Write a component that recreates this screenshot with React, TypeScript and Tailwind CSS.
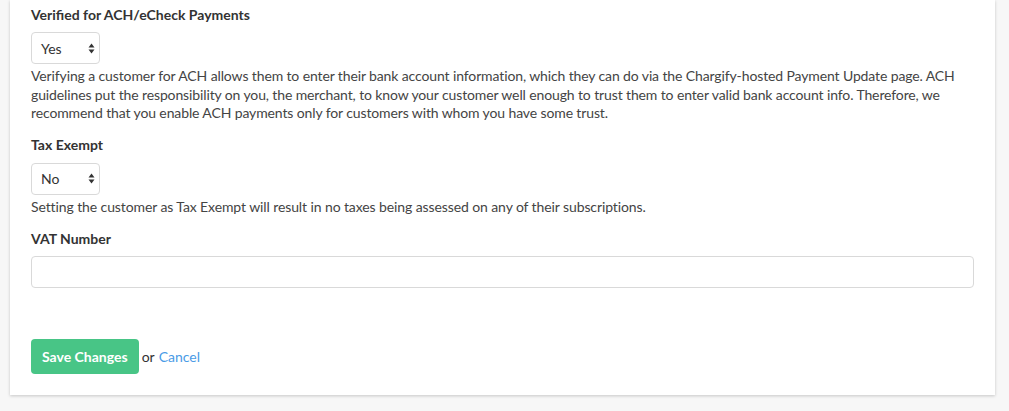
import React from "react";

function Arrows() {
  return (
    <svg width="7" height="11" viewBox="0 0 7 11" className="shrink-0">
      <path d="M3.5 0.5 L6.5 4.5 L0.5 4.5 Z" fill="#333" />
      <path d="M3.5 10.5 L6.5 6.5 L0.5 6.5 Z" fill="#333" />
    </svg>
  );
}

function FakeSelect({ value }: { value: string }) {
  return (
    <div className="flex h-[32px] w-[69px] items-center justify-between rounded-[4px] border border-[#d9d9d9] bg-white pl-[9px] pr-[4px] text-[14px] text-[#333]">
      <span>{value}</span>
      <Arrows />
    </div>
  );
}

export default function App() {
  return (
    <div className="min-h-[411px] w-full bg-[#f7f7f7] font-['Lato','Liberation_Sans',sans-serif] text-[14px] text-[#444]">
      <div className="ml-[10px] w-[985px] bg-white px-[21px] pb-[21px] pt-[5px] shadow-[0_1px_3px_rgba(0,0,0,0.2)]">
        <div className="text-[14px] font-bold leading-[20px] text-[#333]">Verified for ACH/eCheck Payments</div>
        <div className="mt-[7px]">
          <FakeSelect value="Yes" />
        </div>
        <p className="mt-[3px] w-[943px] leading-[18.5px] tracking-[-0.12px]">
          Verifying a customer for ACH allows them to enter their bank account information, which they can do via the Chargify-hosted Payment Update page. ACH guidelines put the responsibility on you, the merchant, to know your customer well enough to trust them to enter valid bank account info. Therefore, we recommend that you enable ACH payments only for customers with whom you have some trust.
        </p>
        <div className="mt-[12px] text-[14px] font-bold leading-[20px] text-[#333]">Tax Exempt</div>
        <div className="mt-[8px]">
          <FakeSelect value="No" />
        </div>
        <p className="mt-[3px] leading-[18.5px] tracking-[-0.1px]">
          Setting the customer as Tax Exempt will result in no taxes being assessed on any of their subscriptions.
        </p>
        <div className="mt-[13px] text-[14px] font-bold leading-[20px] text-[#333]">VAT Number</div>
        <div className="mt-[7px] h-[32px] w-[943px] rounded-[4px] border border-[#d9d9d9] bg-white" />
        <div className="mt-[51px] flex items-center">
          <button className="h-[35px] rounded-[4px] bg-[#48c586] px-[11px] text-[14px] font-bold text-white">
            Save Changes
          </button>
          <span className="ml-[3px] text-[#333]">or</span>
          <a className="ml-[4px] text-[#4a9be6]" href="#">Cancel</a>
        </div>
      </div>
    </div>
  );
}
